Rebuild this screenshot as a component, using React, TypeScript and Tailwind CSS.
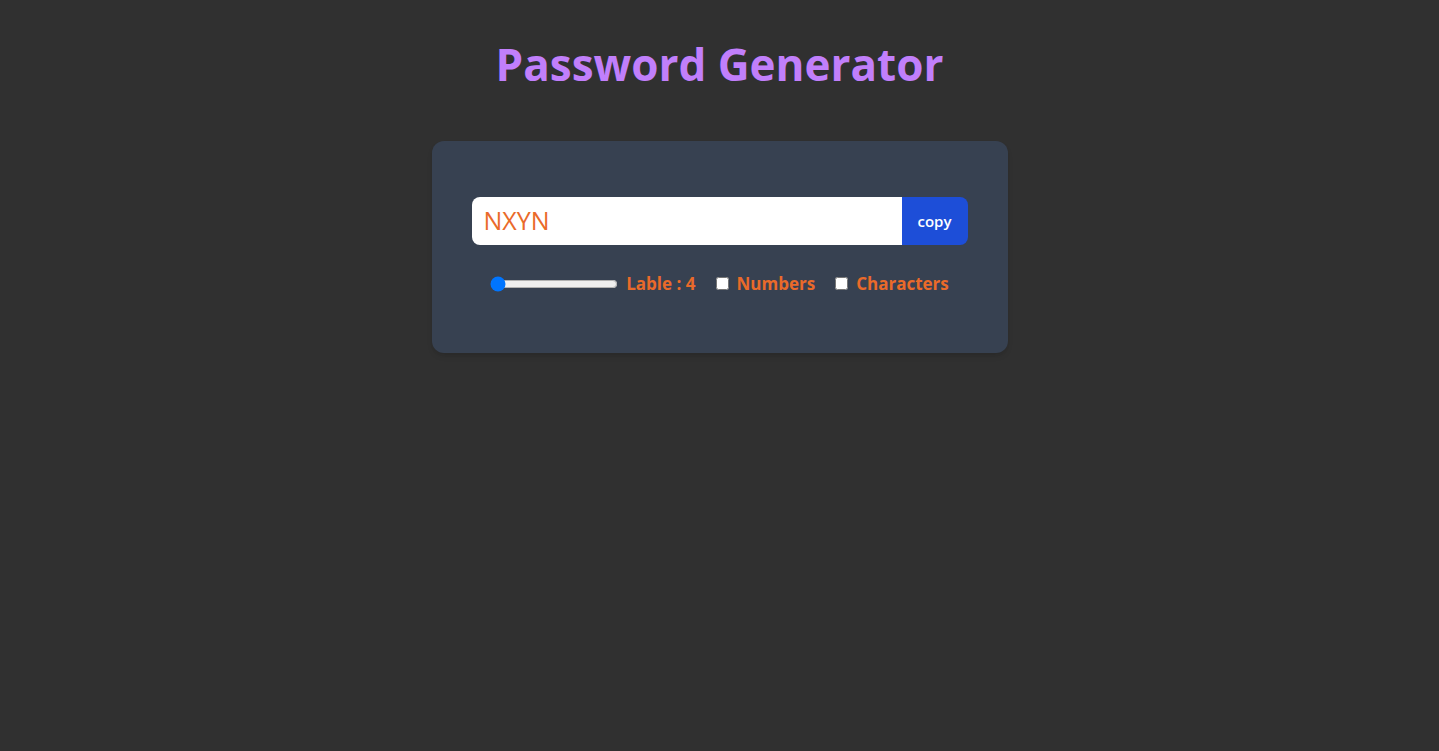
import { useState } from 'react'

export default function App() {
  const [length, setLength] = useState(4)
  const [numbers, setNumbers] = useState(false)
  const [chars, setChars] = useState(false)

  return (
    <div className="min-h-screen w-full bg-[#303030] pt-[36px] font-['Open_Sans',sans-serif]">
      <h1 className="text-center text-[44px] leading-[56px] font-bold text-[#c17ffb]">Password Generator</h1>
      <div className="mx-auto mt-[49px] w-[576px] rounded-xl bg-[#374151] px-10 pt-14 pb-14 shadow-md">
        <div className="flex h-12 overflow-hidden rounded-lg">
          <input
            type="text"
            value="NXYN"
            readOnly
            className="w-full bg-white px-3 text-[25px] text-[#ea6a2a] outline-none"
          />
          <button className="w-[66px] shrink-0 bg-[#1d4ed8] text-[15px] font-semibold text-white">copy</button>
        </div>
        <div className="mt-[26px] flex items-center justify-center text-[17px] font-bold text-[#ea6a2a]">
          <div className="flex items-center gap-x-2">
            <input
              type="range"
              min={4}
              max={100}
              value={length}
              onChange={(e) => setLength(Number(e.target.value))}
              className="w-[128px] cursor-pointer"
            />
            <label>Lable : {length}</label>
          </div>
          <div className="ml-5 flex items-center gap-x-2">
            <input type="checkbox" checked={numbers} onChange={() => setNumbers(!numbers)} />
            <label>Numbers</label>
          </div>
          <div className="ml-5 flex items-center gap-x-2">
            <input type="checkbox" checked={chars} onChange={() => setChars(!chars)} />
            <label>Characters</label>
          </div>
        </div>
      </div>
    </div>
  )
}
